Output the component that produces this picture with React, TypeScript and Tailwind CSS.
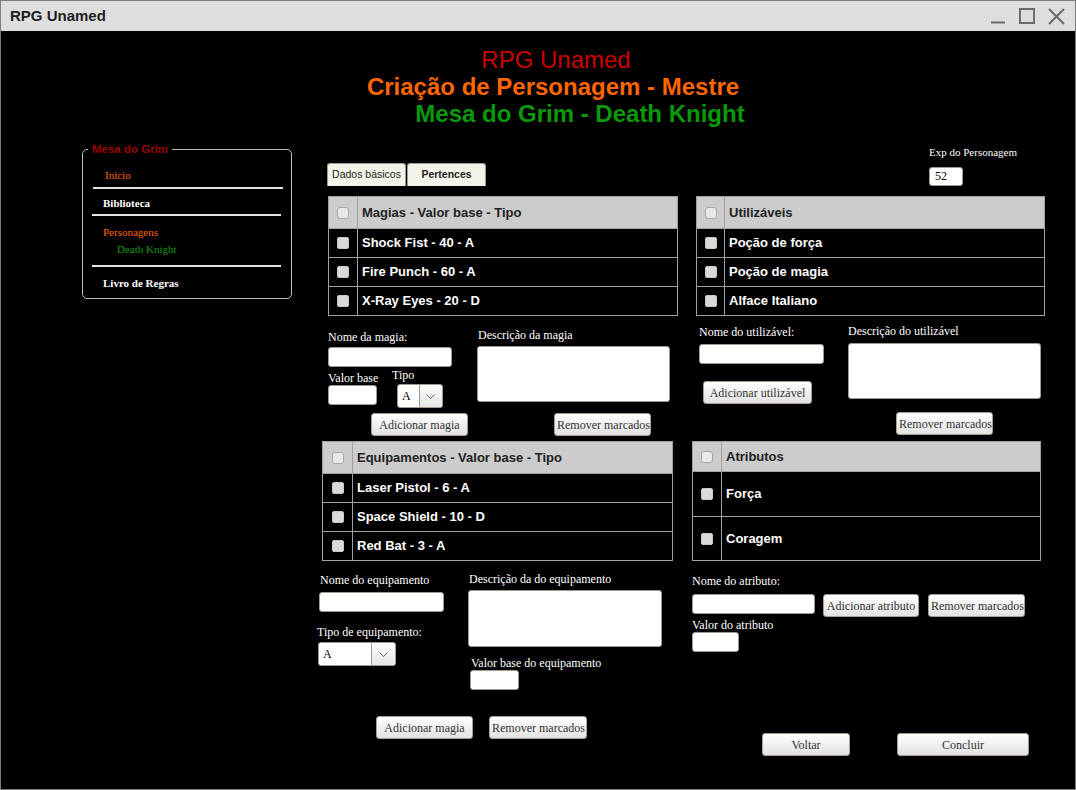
import React from 'react';

const sans = "font-['Liberation_Sans',Arial,sans-serif]";
const serif = "font-['Liberation_Serif','Times_New_Roman',serif]";

function Check({ head }: { head?: boolean }) {
  return (
    <span
      className={
        head
          ? 'block h-[12px] w-[12px] rounded-[3px] border border-[#a8a8a8] bg-[#e8e8e8]'
          : 'block h-[12px] w-[12px] rounded-[2px] border border-[#c8c8c8] bg-[#dadada]'
      }
    />
  );
}

interface TableProps {
  title: string;
  items: string[];
  box: string;
  cell: string;
  head: string;
  row: string;
}

function ListTable({ title, items, box, cell, head, row }: TableProps) {
  return (
    <div className={`border border-[#a0a0a0] ${box}`}>
      <div className={`flex bg-[#cccccc] ${head}`}>
        <div className={`flex shrink-0 items-center justify-center border-r border-[#a0a0a0] ${cell}`}>
          <Check head />
        </div>
        <div className="flex items-center pl-[4px] text-[13px] font-bold text-[#222]">{title}</div>
      </div>
      {items.map((item) => (
        <div key={item} className={`flex border-t border-[#a0a0a0] ${row}`}>
          <div className={`flex shrink-0 items-center justify-center border-r border-[#a0a0a0] ${cell}`}>
            <Check />
          </div>
          <div className="flex items-center pl-[4px] pb-[1px] text-[13px] font-bold text-white">{item}</div>
        </div>
      ))}
    </div>
  );
}

function Label({ children, className = '' }: { children: React.ReactNode; className?: string }) {
  return <div className={`${serif} whitespace-nowrap text-[12px] leading-[14px] text-white ${className}`}>{children}</div>;
}

function Field({ className = '', value }: { className?: string; value?: string }) {
  return (
    <input
      readOnly
      value={value ?? ''}
      className={`${serif} block rounded-[3px] border border-[#a39b8d] bg-white px-[5px] text-[12px] text-black outline-none ${className}`}
    />
  );
}

function Area({ className = '' }: { className?: string }) {
  return <textarea readOnly className={`block resize-none rounded-[3px] border border-[#a39b8d] bg-white outline-none ${className}`} />;
}

function Btn({ children, className = '' }: { children: React.ReactNode; className?: string }) {
  return (
    <button
      className={`${serif} block h-[23px] shrink-0 whitespace-nowrap rounded-[3px] border border-[#a89f91] bg-linear-to-b from-white to-[#e2e2e2] px-[2px] text-[12px] text-[#333] ${className}`}
    >
      {children}
    </button>
  );
}

function Select({ left }: { left: string }) {
  return (
    <div className="flex h-[24px] rounded-[3px] border border-[#a39b8d] bg-white">
      <div className={`${serif} flex items-center pl-[4px] text-[12px] text-black ${left}`}>A</div>
      <div className="flex w-[24px] items-center justify-center rounded-r-[3px] border-l border-[#a39b8d] bg-linear-to-b from-[#fbfbfb] to-[#e6e6e6]">
        <svg width="9" height="5" viewBox="0 0 9 5" fill="none">
          <path d="M0.5 0.5 L4.5 4.5 L8.5 0.5" stroke="#666" strokeWidth="1" />
        </svg>
      </div>
    </div>
  );
}

function Sidebar() {
  return (
    <fieldset className="ml-[81px] mt-[3px] w-[210px] rounded-[5px] border border-[#bdbdbd] px-0 pb-[8px]">
      <legend className={`${sans} ml-[5px] px-[4px] text-[11.5px] font-bold leading-[13px] text-[#9c0000]`}>Mesa do Grim</legend>
      <div className={`${serif} text-[11px] leading-[14px]`}>
        <div className="ml-[22px] mt-[12px] text-[#ff6600]">Inicio</div>
        <div className="ml-[10px] mt-[5px] h-[2px] w-[190px] bg-[#e4e4e4]" />
        <div className="ml-[20px] mt-[7px] font-bold text-white">Biblioteca</div>
        <div className="ml-[9px] mt-[4px] h-[2px] w-[189px] bg-[#e4e4e4]" />
        <div className="ml-[20px] mt-[9px] text-[#ff6600]">Personagens</div>
        <div className="ml-[34px] mt-[3px] text-[#129912]">Death Knight</div>
        <div className="ml-[9px] mt-[9px] h-[2px] w-[189px] bg-[#e4e4e4]" />
        <div className="ml-[20px] mt-[9px] font-bold text-white">Livro de Regras</div>
      </div>
    </fieldset>
  );
}

export default function App() {
  return (
    <div className={`${sans} h-[790px] w-[1076px] overflow-hidden border border-[#7d7d7d] bg-black`}>
      {/* title bar */}
      <div className="flex h-[30px] items-center bg-[#dedede]">
        <div className="ml-[9px] text-[15px] font-bold text-[#1e1e1e]">RPG Unamed</div>
        <div className="ml-auto mr-[10px] flex items-center gap-[13px]">
          <svg width="16" height="16" viewBox="0 0 16 16" fill="none">
            <path d="M1 14.5 H15" stroke="#6a6a6a" strokeWidth="2" />
          </svg>
          <svg width="16" height="16" viewBox="0 0 16 16" fill="none">
            <rect x="1" y="1" width="14" height="14" stroke="#6a6a6a" strokeWidth="2" />
          </svg>
          <svg width="17" height="17" viewBox="0 0 17 17" fill="none">
            <path d="M1 1 L16 16 M16 1 L1 16" stroke="#6a6a6a" strokeWidth="2" />
          </svg>
        </div>
      </div>

      {/* heading */}
      <div className="pt-[15px] text-[24px] leading-[27px]">
        <div className="pl-[36px] text-center text-[#cc0000]">RPG Unamed</div>
        <div className="pl-[30px] text-center font-bold text-[#ff6600]">Criação de Personagem - Mestre</div>
        <div className="pl-[84px] text-center font-bold text-[#0a990a]">Mesa do Grim - Death Knight</div>
      </div>

      <div className="mt-[13px] flex">
        <div>
          <Sidebar />
        </div>

        <div className="ml-[25px] w-[730px]">
          {/* row A: tabs + exp */}
          <div className="flex h-[56px]">
            <div className="w-[373px]">
              <div className="ml-[10px] mt-[23px] flex gap-[1px] text-[10.5px] text-[#222]">
                <div className="flex h-[23px] w-[79px] items-center justify-center rounded-t-[3px] border border-b-0 border-[#9d9d9d] bg-[#f3f3ea]">Dados básicos</div>
                <div className="flex h-[23px] w-[79px] items-center justify-center rounded-t-[3px] border border-b-0 border-[#9d9d9d] bg-[#f3f3ea] font-bold">Pertences</div>
              </div>
            </div>
            <div className="ml-[239px]">
              <div className={`${serif} mt-[6px] whitespace-nowrap text-[11px] leading-[13px] text-white`}>Exp do Personagem</div>
              <Field value="52" className="mt-[8px] h-[19px] w-[34px]" />
            </div>
          </div>

          {/* row B: magias / utilizaveis */}
          <div className="flex h-[120px]">
            <div className="w-[373px]">
              <ListTable
                title="Magias - Valor base - Tipo"
                items={['Shock Fist - 40 - A', 'Fire Punch - 60 - A', 'X-Ray Eyes - 20 - D']}
                box="ml-[11px] w-[350px]"
                cell="w-[29px]"
                head="h-[31px]"
                row="h-[29px]"
              />
            </div>
            <ListTable
              title="Utilizáveis"
              items={['Poção de força', 'Poção de magia', 'Alface Italiano']}
              box="ml-[6px] w-[349px]"
              cell="w-[28px]"
              head="h-[31px]"
              row="h-[29px]"
            />
          </div>

          {/* row C: magia + utilizavel forms */}
          <div className="flex h-[125px]">
            <div className="w-[373px]">
              <div className="flex">
                <div className="ml-[11px] w-[149px]">
                  <Label className="mt-[14px]">Nome da magia:</Label>
                  <Field className="mt-[3px] h-[20px] w-[124px]" />
                  <div className="flex">
                    <div className="w-[52px]">
                      <Label className="mt-[4px] leading-[13px]">Valor base</Label>
                      <Field className="h-[20px] w-[49px]" />
                    </div>
                    <div className="ml-[12px]">
                      <Label className="mt-[1px] leading-[13px]">Tipo</Label>
                      <div className="ml-[5px] mt-[2px] w-[46px]">
                        <Select left="w-[21px]" />
                      </div>
                    </div>
                  </div>
                </div>
                <div>
                  <Label className="ml-[1px] mt-[12px]">Descrição da magia</Label>
                  <Area className="mt-[4px] h-[56px] w-[193px]" />
                </div>
              </div>
              <div className="mt-[5px] flex">
                <Btn className="ml-[54px] w-[97px]">Adicionar magia</Btn>
                <Btn className="ml-[86px] w-[97px]">Remover marcados</Btn>
              </div>
            </div>
            <div className="flex">
              <div className="ml-[9px] w-[149px]">
                <Label className="mt-[9px]">Nome do utilizável:</Label>
                <Field className="mt-[5px] h-[20px] w-[125px]" />
                <Btn className="ml-[4px] mt-[17px] w-[109px]">Adicionar utilizável</Btn>
              </div>
              <div>
                <Label className="mt-[8px]">Descrição do utilizável</Label>
                <Area className="mt-[5px] h-[56px] w-[193px]" />
                <Btn className="ml-[48px] mt-[13px] w-[97px]">Remover marcados</Btn>
              </div>
            </div>
          </div>

          {/* row D: equipamentos / atributos */}
          <div className="flex h-[120px]">
            <div className="w-[373px]">
              <ListTable
                title="Equipamentos - Valor base - Tipo"
                items={['Laser Pistol - 6 - A', 'Space Shield - 10 - D', 'Red Bat - 3 - A']}
                box="ml-[5px] w-[351px]"
                cell="w-[30px]"
                head="h-[31px]"
                row="h-[29px]"
              />
            </div>
            <ListTable
              title="Atributos"
              items={['Força', 'Coragem']}
              box="ml-[2px] w-[349px]"
              cell="w-[29px]"
              head="h-[29px]"
              row="h-[45px]"
            />
          </div>

          {/* row E: equipamento + atributo forms */}
          <div className="flex h-[229px]">
            <div className="w-[373px]">
              <div className="flex">
                <div className="ml-[2px] w-[149px]">
                  <Label className="ml-[1px] mt-[12px]">Nome do equipamento</Label>
                  <Field className="mt-[5px] h-[20px] w-[125px]" />
                  <Label className="ml-[-2px] mt-[13px]">Tipo de equipamento:</Label>
                  <div className="ml-[-1px] mt-[3px] w-[78px]">
                    <Select left="w-[52px]" />
                  </div>
                </div>
                <div>
                  <Label className="ml-[1px] mt-[11px]">Descrição da do equipamento</Label>
                  <Area className="mt-[4px] h-[57px] w-[194px]" />
                  <Label className="ml-[3px] mt-[9px] leading-[13px]">Valor base do equipamento</Label>
                  <Field className="ml-[2px] h-[20px] w-[49px]" />
                </div>
              </div>
              <div className="mt-[26px] flex">
                <Btn className="ml-[59px] w-[97px]">Adicionar magia</Btn>
                <Btn className="ml-[16px] w-[98px]">Remover marcados</Btn>
              </div>
            </div>
            <div>
              <Label className="ml-[2px] mt-[13px]">Nome do atributo:</Label>
              <div className="ml-[2px] mt-[6px] flex">
                <Field className="h-[20px] w-[123px]" />
                <Btn className="ml-[8px] h-[22px] w-[96px]">Adicionar atributo</Btn>
                <Btn className="ml-[9px] h-[22px] w-[97px]">Remover marcados</Btn>
              </div>
              <Label className="ml-[2px] mt-[1px]">Valor do atributo</Label>
              <Field className="ml-[2px] h-[20px] w-[47px]" />
              <div className="mt-[81px] flex">
                <Btn className="ml-[72px] w-[88px]">Voltar</Btn>
                <Btn className="ml-[47px] w-[132px]">Concluir</Btn>
              </div>
            </div>
          </div>
        </div>
      </div>
    </div>
  );
}
